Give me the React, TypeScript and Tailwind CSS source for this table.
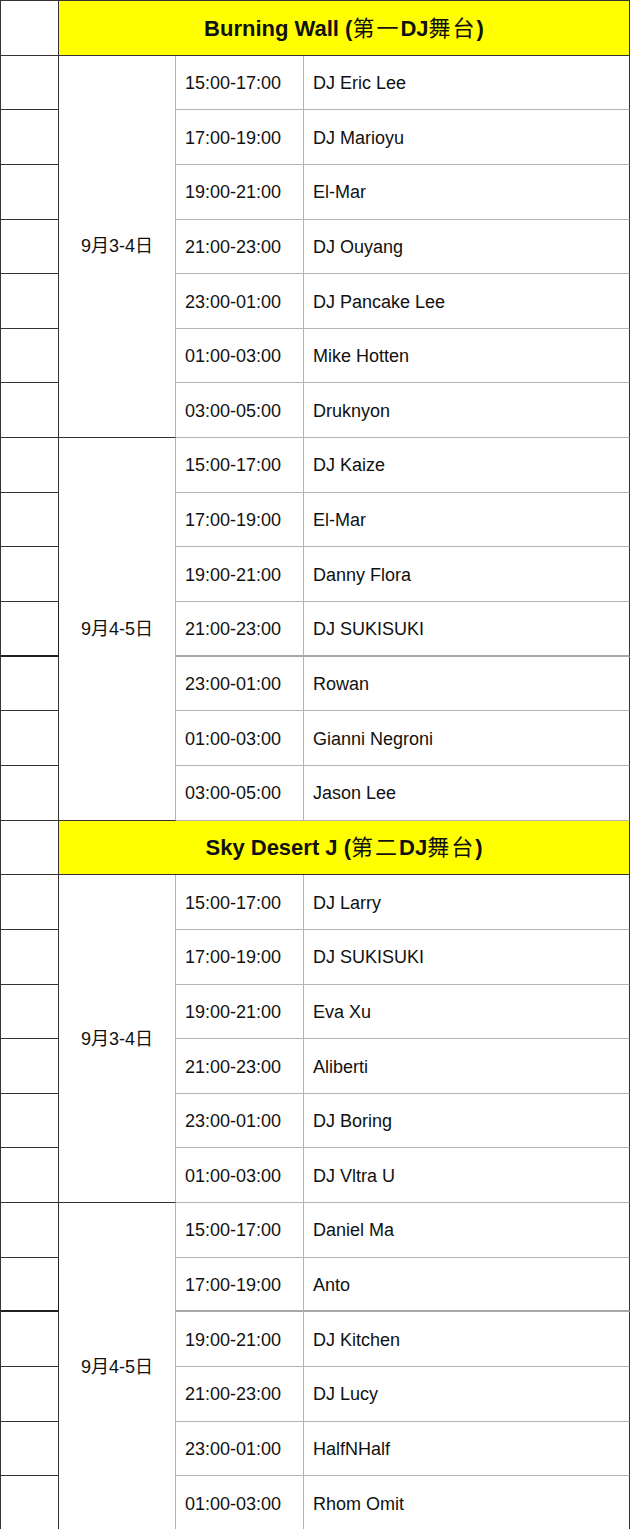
import React from "react";

type Group = { date: string; rows: [string, string][]; thickAfter?: number };
type Section = { title: [string, string, string, string, string]; groups: Group[] };

const sections: Section[] = [
  {
    title: ["Burning Wall (", "第一", "DJ", "舞台", ")"],
    groups: [
      {
        date: "9月3-4日",
        rows: [
          ["15:00-17:00", "DJ Eric Lee"],
          ["17:00-19:00", "DJ Marioyu"],
          ["19:00-21:00", "El-Mar"],
          ["21:00-23:00", "DJ Ouyang"],
          ["23:00-01:00", "DJ Pancake Lee"],
          ["01:00-03:00", "Mike Hotten"],
          ["03:00-05:00", "Druknyon"],
        ],
      },
      {
        date: "9月4-5日",
        thickAfter: 3,
        rows: [
          ["15:00-17:00", "DJ Kaize"],
          ["17:00-19:00", "El-Mar"],
          ["19:00-21:00", "Danny Flora"],
          ["21:00-23:00", "DJ SUKISUKI"],
          ["23:00-01:00", "Rowan"],
          ["01:00-03:00", "Gianni Negroni"],
          ["03:00-05:00", "Jason Lee"],
        ],
      },
    ],
  },
  {
    title: ["Sky Desert J (", "第二", "DJ", "舞台", ")"],
    groups: [
      {
        date: "9月3-4日",
        rows: [
          ["15:00-17:00", "DJ Larry"],
          ["17:00-19:00", "DJ SUKISUKI"],
          ["19:00-21:00", "Eva Xu"],
          ["21:00-23:00", "Aliberti"],
          ["23:00-01:00", "DJ Boring"],
          ["01:00-03:00", "DJ Vltra U"],
        ],
      },
      {
        date: "9月4-5日",
        thickAfter: 1,
        rows: [
          ["15:00-17:00", "Daniel Ma"],
          ["17:00-19:00", "Anto"],
          ["19:00-21:00", "DJ Kitchen"],
          ["21:00-23:00", "DJ Lucy"],
          ["23:00-01:00", "HalfNHalf"],
          ["01:00-03:00", "Rhom Omit"],
        ],
      },
    ],
  },
];

export default function App() {
  const cells: React.ReactNode[] = [];
  let k = 0;
  sections.forEach((s) => {
    cells.push(<div key={k++} className="border-r border-b border-[#333]" />);
    cells.push(
      <div
        key={k++}
        className="col-span-3 flex items-center justify-center bg-[#ffff00] border-b border-r border-[#333] text-[22px] font-bold text-[#111] pt-[1px]"
      >
        <span>{s.title[0]}</span>
        <span className="font-normal tracking-[2px]">{s.title[1]}</span>
        <span>{s.title[2]}</span>
        <span className="font-normal tracking-[2px]">{s.title[3]}</span>
        <span>{s.title[4]}</span>
      </div>
    );
    s.groups.forEach((g) => {
      const n = g.rows.length;
      g.rows.forEach((r, i) => {
        const thick = g.thickAfter === i;
        cells.push(
          <div
            key={k++}
            className={
              thick
                ? "border-r border-b-2 border-[#222]"
                : "border-r border-b border-[#333]"
            }
          />
        );
        if (i === 0) {
          cells.push(
            <div
              key={k++}
              style={{ gridRow: `span ${n} / span ${n}` }}
              className="flex items-center justify-center pt-[1px] border-r border-r-[#b4b4b4] border-b border-b-[#333] text-[18px] text-[#111]"
            >
              {g.date}
            </div>
          );
        }
        cells.push(
          <div
            key={k++}
            className={
              "flex items-center pl-[9px] pt-[2px] border-r border-[#b4b4b4] text-[18px] text-[#111] " +
              (thick ? "border-b-2 border-b-[#a8a8a8]" : "border-b")
            }
          >
            {r[0]}
          </div>
        );
        cells.push(
          <div
            key={k++}
            className={
              "flex items-center pl-[9px] pt-[2px] border-r border-r-[#333] text-[18px] text-[#111] " +
              (thick ? "border-b-2 border-b-[#a8a8a8]" : "border-b border-b-[#b4b4b4]")
            }
          >
            {r[1]}
          </div>
        );
      });
    });
  });

  return (
    <div className="h-[1529px] overflow-hidden">
      <div
        className="w-[630px] h-[1531px] bg-white border-t border-l border-[#333] grid grid-cols-[58px_117px_128px_1fr] grid-rows-[repeat(28,minmax(0,1fr))]"
        style={{ fontFamily: '"Liberation Sans", "Noto Sans CJK SC", Arial, sans-serif' }}
      >
        {cells}
      </div>
    </div>
  );
}
